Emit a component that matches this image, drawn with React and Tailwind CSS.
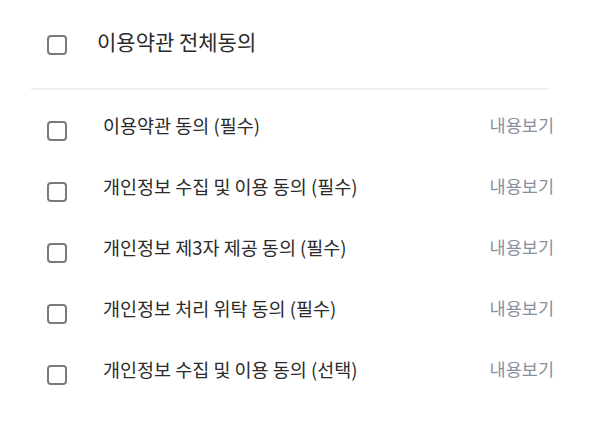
import React from "react";

const items = [
  "이용약관 동의 (필수)",
  "개인정보 수집 및 이용 동의 (필수)",
  "개인정보 제3자 제공 동의 (필수)",
  "개인정보 처리 위탁 동의 (필수)",
  "개인정보 수집 및 이용 동의 (선택)",
];

function Box() {
  return (
    <span className="mt-2 block h-[20px] w-[20px] shrink-0 rounded-[4px] border-2 border-[#7a7a7a] bg-white" />
  );
}

export default function App() {
  return (
    <div
      className="h-[429px] w-[600px] bg-white text-[#2b2b2b]"
      style={{ fontFamily: '"Noto Sans CJK KR", "Noto Sans", sans-serif' }}
    >
      <div className="flex items-start pl-[47px] pt-[27px]">
        <Box />
        <span className="ml-[30px] text-[21px] leading-[28px]">이용약관 전체동의</span>
      </div>
      <div className="ml-[31px] mt-[33px] h-[2px] w-[518px] bg-[#eef0f3]" />
      <div className="mt-[23px] flex flex-col">
        {items.map((t) => (
          <div key={t} className="flex h-[61px] items-start pl-[47px] pr-[46px]">
            <Box />
            <span className="ml-[36px] flex-1 text-[18.5px] leading-[24px]">{t}</span>
            <span className="text-[17.5px] leading-[24px] text-[#8a8fa0]">내용보기</span>
          </div>
        ))}
      </div>
    </div>
  );
}
